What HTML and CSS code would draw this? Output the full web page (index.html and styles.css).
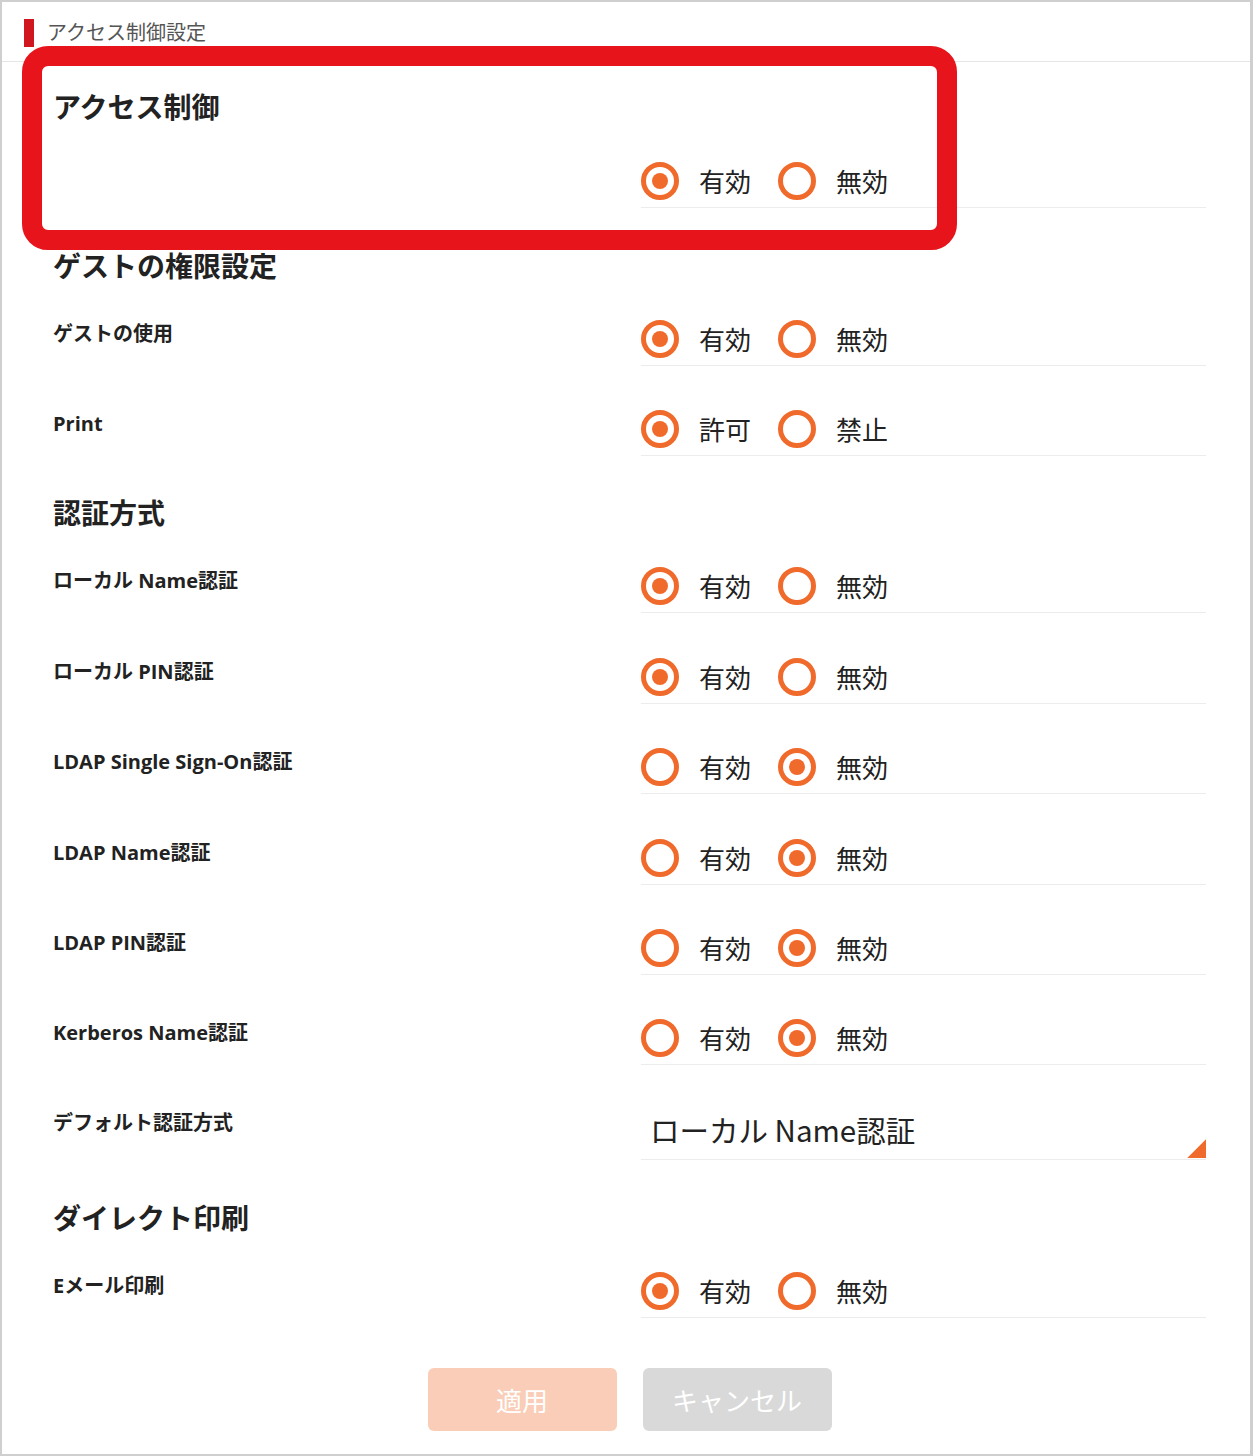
FILE: index.html
```html
<!DOCTYPE html>
<html lang="ja">
<head>
  <meta charset="UTF-8" />
  <title>アクセス制御設定</title>
  <link rel="stylesheet" href="styles.css">
</head>
<body>

<div class="frame">

  <!-- ページタイトル -->
  <div class="page-head">
    <span class="page-mark"></span>
    <span class="page-title">アクセス制御設定</span>
  </div>

  <div class="content">

    <!-- アクセス制御 -->
    <h2 class="sec-title first">アクセス制御</h2>
    <div class="row">
      <div class="label"></div>
      <div class="ctrl">
        <span class="opt"><span class="radio on"></span>有効</span>
        <span class="opt"><span class="radio"></span>無効</span>
      </div>
    </div>

    <!-- ゲストの権限設定 -->
    <h2 class="sec-title">ゲストの権限設定</h2>
    <div class="row">
      <div class="label">ゲストの使用</div>
      <div class="ctrl">
        <span class="opt"><span class="radio on"></span>有効</span>
        <span class="opt"><span class="radio"></span>無効</span>
      </div>
    </div>
    <div class="row">
      <div class="label">Print</div>
      <div class="ctrl">
        <span class="opt"><span class="radio on"></span>許可</span>
        <span class="opt"><span class="radio"></span>禁止</span>
      </div>
    </div>

    <!-- 認証方式 -->
    <h2 class="sec-title">認証方式</h2>
    <div class="row">
      <div class="label">ローカル Name認証</div>
      <div class="ctrl">
        <span class="opt"><span class="radio on"></span>有効</span>
        <span class="opt"><span class="radio"></span>無効</span>
      </div>
    </div>
    <div class="row">
      <div class="label">ローカル PIN認証</div>
      <div class="ctrl">
        <span class="opt"><span class="radio on"></span>有効</span>
        <span class="opt"><span class="radio"></span>無効</span>
      </div>
    </div>
    <div class="row">
      <div class="label">LDAP Single Sign-On認証</div>
      <div class="ctrl">
        <span class="opt"><span class="radio"></span>有効</span>
        <span class="opt"><span class="radio on"></span>無効</span>
      </div>
    </div>
    <div class="row">
      <div class="label">LDAP Name認証</div>
      <div class="ctrl">
        <span class="opt"><span class="radio"></span>有効</span>
        <span class="opt"><span class="radio on"></span>無効</span>
      </div>
    </div>
    <div class="row">
      <div class="label">LDAP PIN認証</div>
      <div class="ctrl">
        <span class="opt"><span class="radio"></span>有効</span>
        <span class="opt"><span class="radio on"></span>無効</span>
      </div>
    </div>
    <div class="row">
      <div class="label">Kerberos Name認証</div>
      <div class="ctrl">
        <span class="opt"><span class="radio"></span>有効</span>
        <span class="opt"><span class="radio on"></span>無効</span>
      </div>
    </div>
    <div class="row row-select">
      <div class="label">デフォルト認証方式</div>
      <div class="ctrl select">
        ローカル Name認証
        <span class="select-arrow"></span>
      </div>
    </div>

    <!-- ダイレクト印刷 -->
    <h2 class="sec-title">ダイレクト印刷</h2>
    <div class="row">
      <div class="label">Eメール印刷</div>
      <div class="ctrl">
        <span class="opt"><span class="radio on"></span>有効</span>
        <span class="opt"><span class="radio"></span>無効</span>
      </div>
    </div>

    <div class="buttons">
      <button class="btn btn-apply">適用</button>
      <button class="btn btn-cancel">キャンセル</button>
    </div>

  </div>

  <!-- 強調枠 -->
  <div class="highlight"></div>

</div>

</body>
</html>
```

FILE: styles.css
```css
body {
  margin: 0;
  font-family: "Noto Sans CJK JP", "Open Sans", sans-serif;
  color: #222;
  background: #fff;
}
.frame {
  position: relative;
  width: 1253px;
  height: 1456px;
  box-sizing: border-box;
  border: 2px solid #cfcfcf;
  border-right-width: 3px;
  background: #fff;
}
.page-head {
  display: flex;
  align-items: center;
  height: 59px;
  padding-left: 22px;
  border-bottom: 1px solid #e6e6e6;
}
.page-mark {
  width: 10px;
  height: 28px;
  background: #d0161e;
  margin-right: 13px;
  margin-top: 2px;
}
.page-title {
  font-size: 20px;
  color: #555;
  line-height: 28px;
}
.content {
  padding: 0 44px 0 51px;
}
.sec-title {
  margin: 36.5px 0 0;
  font-size: 28px;
  font-weight: bold;
  line-height: 40px;
  height: 40px;
}
.sec-title.first {
  margin-top: 24px;
}
.row {
  display: grid;
  grid-template-columns: 588px 565px;
  align-items: end;
  height: 90.4px;
}
.sec-title + .row {
  height: 81px;
}
.sec-title.first + .row {
  height: 82px;
}
.label {
  font-family: "Open Sans", "Noto Sans CJK JP", sans-serif;
  font-size: 20px;
  font-weight: bold;
  line-height: 28px;
  padding-bottom: 18px;
}
.ctrl {
  display: flex;
  align-items: center;
  height: 52px;
  border-bottom: 1px solid #ececec;
  font-size: 26px;
  line-height: 30px;
}
.opt {
  display: flex;
  align-items: center;
  margin-right: 27px;
}
.radio {
  position: relative;
  width: 38px;
  height: 38px;
  box-sizing: border-box;
  border: 5px solid #f06a2c;
  border-radius: 50%;
  margin-right: 20px;
}
.radio.on::after {
  content: "";
  position: absolute;
  left: 6px;
  top: 6px;
  width: 16px;
  height: 16px;
  border-radius: 50%;
  background: #f06a2c;
}
.row-select {
  height: 95px;
}
.row-select .label {
  padding-bottom: 23px;
}
.ctrl.select {
  position: relative;
  height: 60px;
  padding-left: 9px;
  font-size: 29.5px;
  align-items: center;
}
.select-arrow {
  position: absolute;
  right: 0;
  bottom: 1px;
  width: 19px;
  height: 19px;
  background: #f06a2c;
  clip-path: polygon(100% 0, 100% 100%, 0 100%);
}
.buttons {
  display: flex;
  justify-content: center;
  gap: 26px;
  margin-top: 50px;
}
.btn {
  width: 189px;
  height: 63px;
  border: none;
  border-radius: 6px;
  font-family: "Noto Sans CJK JP", sans-serif;
  font-size: 26px;
  color: #fff;
}
.btn-apply {
  background: #f9cdb7;
}
.btn-cancel {
  background: #d9d9d9;
}
.highlight {
  position: absolute;
  left: 20px;
  top: 44px;
  width: 895px;
  height: 164px;
  border: 20px solid #e8141c;
  border-radius: 26px;
}
```
